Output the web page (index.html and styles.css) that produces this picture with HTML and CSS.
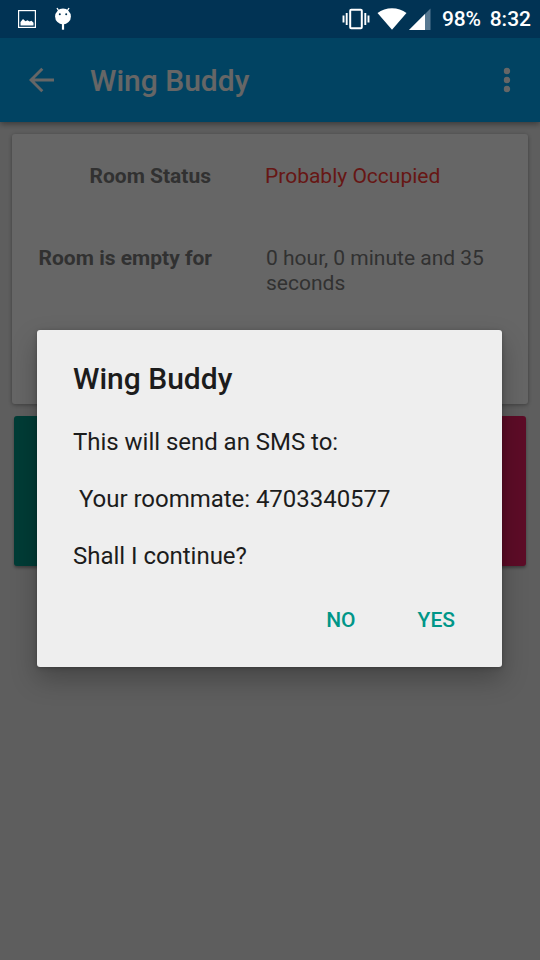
FILE: index.html
```html
<!DOCTYPE html>
<html lang="en">
<head>
    <meta charset="UTF-8">
    <meta name="viewport" content="width=device-width, initial-scale=1.0">
    <title>Wing Buddy</title>
    <link rel="stylesheet" href="styles.css">
</head>
<body>
    <div class="status-bar">
        <div class="status-left">
            <svg class="icon-image" width="18" height="18" viewBox="0 0 18 18">
                <rect x="0.6" y="0.6" width="16.8" height="16.8" fill="none" stroke="#fff" stroke-width="1.2"/>
                <path d="M2.500 15.500v-3.500l2.500-3 2.500 2.300 2-1 2 1.200 2-0.800 2 2v2.800z" fill="#fff"/>
            </svg>
            <svg class="icon-droid" width="18" height="24" viewBox="0 0 18 24">
                <circle cx="9" cy="9.500" r="7.900" fill="#fff"/>
                <path d="M3 1l2.500 4M15 1l-2.500 4" stroke="#fff" stroke-width="1.400"/>
                <path d="M9 16.500v6.200" stroke="#fff" stroke-width="2.200"/>
                <circle cx="5.800" cy="7.200" r="1" fill="#013354"/>
                <circle cx="12.200" cy="7.200" r="1" fill="#013354"/>
            </svg>
        </div>
        <div class="status-right">
            <svg class="icon-vibrate" width="28" height="22" viewBox="0 0 28 22">
                <rect x="8.200" y="1.700" width="11.600" height="18.600" rx="1" fill="none" stroke="#fff" stroke-width="2"/>
                <path d="M4.700 5v12M23.300 5v12M1.500 7.500v7M26.500 7.500v7" stroke="#fff" stroke-width="1.900"/>
            </svg>
            <svg class="icon-wifi" width="30" height="22" viewBox="0 0 30 22">
                <path d="M0.500 5C8.500-1.300 21.500-1.300 29.500 5L15 21.800z" fill="#fff"/>
            </svg>
            <svg class="icon-signal" width="22" height="22" viewBox="0 0 22 22">
                <path d="M0 22L21.500 0.500V22z" fill="#567891"/>
                <path d="M0 22L16 6V22z" fill="#fff"/>
            </svg>
            <span class="battery">98%</span>
            <span class="clock">8:32</span>
        </div>
    </div>

    <header class="toolbar">
        <svg class="icon-back" width="26" height="26" viewBox="0 0 26 26">
            <path d="M25 13H2.500M13.300 1.700L2 13l11.300 11.300" fill="none" stroke="#fff" stroke-width="2.900"/>
        </svg>
        <h1>Wing Buddy</h1>
        <svg class="icon-more" width="8" height="26" viewBox="0 0 8 26">
            <circle cx="4" cy="4" r="3.200" fill="#fff"/>
            <circle cx="4" cy="13" r="3.200" fill="#fff"/>
            <circle cx="4" cy="22" r="3.200" fill="#fff"/>
        </svg>
    </header>

    <main>
        <div class="card">
            <div class="row">
                <div class="label">Room Status</div>
                <div class="value occupied">Probably Occupied</div>
            </div>
            <div class="row">
                <div class="label">Room is empty for</div>
                <div class="value">0 hour, 0 minute and 35 seconds</div>
            </div>
        </div>
        <div class="tiles">
            <div class="tile teal"></div>
            <div class="tile pink"></div>
        </div>
    </main>

    <div class="scrim">
        <div class="dialog">
            <h2>Wing Buddy</h2>
            <p>This will send an SMS to:

 Your roommate: 4703340577

Shall I continue?</p>
            <div class="actions">
                <button>NO</button>
                <button>YES</button>
            </div>
        </div>
    </div>
</body>
</html>
```
FILE: styles.css
```css
* {
    box-sizing: border-box;
}

body {
    margin: 0;
    height: 960px;
    background: #ebebeb;
    font-family: Roboto, sans-serif;
    overflow: hidden;
}

svg {
    display: block;
    flex: none;
}

/* Status bar, stays bright above the scrim */
.status-bar {
    height: 38px;
    display: flex;
    justify-content: space-between;
    background: #013354;
    color: #fff;
    position: relative;
    z-index: 20;
}

.status-left,
.status-right {
    display: flex;
    align-items: center;
}

.status-left {
    padding-left: 18px;
    gap: 18px;
}

.status-right {
    padding-right: 9px;
    font-size: 21px;
    font-weight: 500;
}

.icon-wifi {
    margin-left: 7px;
}

.icon-signal {
    margin-left: 2px;
}

.battery {
    margin-left: 11px;
    letter-spacing: -0.2px;
}

.clock {
    margin-left: 9px;
}

/* Toolbar */
.toolbar {
    height: 84px;
    display: flex;
    align-items: center;
    padding: 0 29px;
    background: #03a9f4;
    color: #fff;
    box-shadow: 0 2px 6px rgba(0, 0, 0, 0.4);
    position: relative;
}

.toolbar h1 {
    flex: 1;
    margin: 0 0 0 35px;
    font-size: 30px;
    font-weight: 500;
}

/* Content */
main {
    padding: 12px;
}

.card {
    height: 270px;
    padding-top: 30px;
    background: #fff;
    border-radius: 3px;
    box-shadow: 0 1px 4px rgba(0, 0, 0, 0.35);
}

.row {
    display: flex;
    height: 82px;
    font-size: 21px;
    line-height: 25px;
    color: #7c7c7c;
}

.label {
    width: 200px;
    padding-right: 1px;
    text-align: right;
    font-weight: 700;
}

.row + .row .label {
    padding-right: 0;
}

.value {
    width: 235px;
    margin-left: 53px;
}

.row + .row .value {
    margin-left: 54px;
}

.value.occupied {
    color: #ff3a35;
}

.tiles {
    display: flex;
    justify-content: space-between;
    padding: 12px 2px 0;
}

.tile {
    width: 252px;
    height: 150px;
    border-radius: 3px;
    box-shadow: 0 2px 3px rgba(0, 0, 0, 0.35);
}

.teal {
    background: #009688;
}

.pink {
    background: #e91e63;
}

/* Dialog */
.scrim {
    position: absolute;
    inset: 0;
    z-index: 10;
    display: flex;
    align-items: center;
    justify-content: center;
    padding-top: 37px;
    background: rgba(0, 0, 0, 0.6);
}

.dialog {
    width: 465px;
    height: 337px;
    margin-right: 1px;
    padding: 31px 35px 0 36px;
    background: #eee;
    border-radius: 3px;
    box-shadow: 0 12px 26px rgba(0, 0, 0, 0.26), 0 1px 4px rgba(0, 0, 0, 0.25);
    color: #1c1c1c;
}

.dialog h2 {
    margin: 0;
    font-size: 30px;
    font-weight: 500;
    line-height: 35px;
}

.dialog p {
    margin: 32px 0 0;
    font-size: 24px;
    line-height: 28.5px;
    letter-spacing: -0.03px;
    white-space: pre-wrap;
}

.actions {
    display: flex;
    justify-content: flex-end;
    gap: 38px;
    margin-top: 25px;
}

.actions button {
    padding: 12px;
    border: none;
    background: none;
    color: #009688;
    font-family: inherit;
    font-size: 21px;
    font-weight: 500;
    line-height: 25px;
}
```
